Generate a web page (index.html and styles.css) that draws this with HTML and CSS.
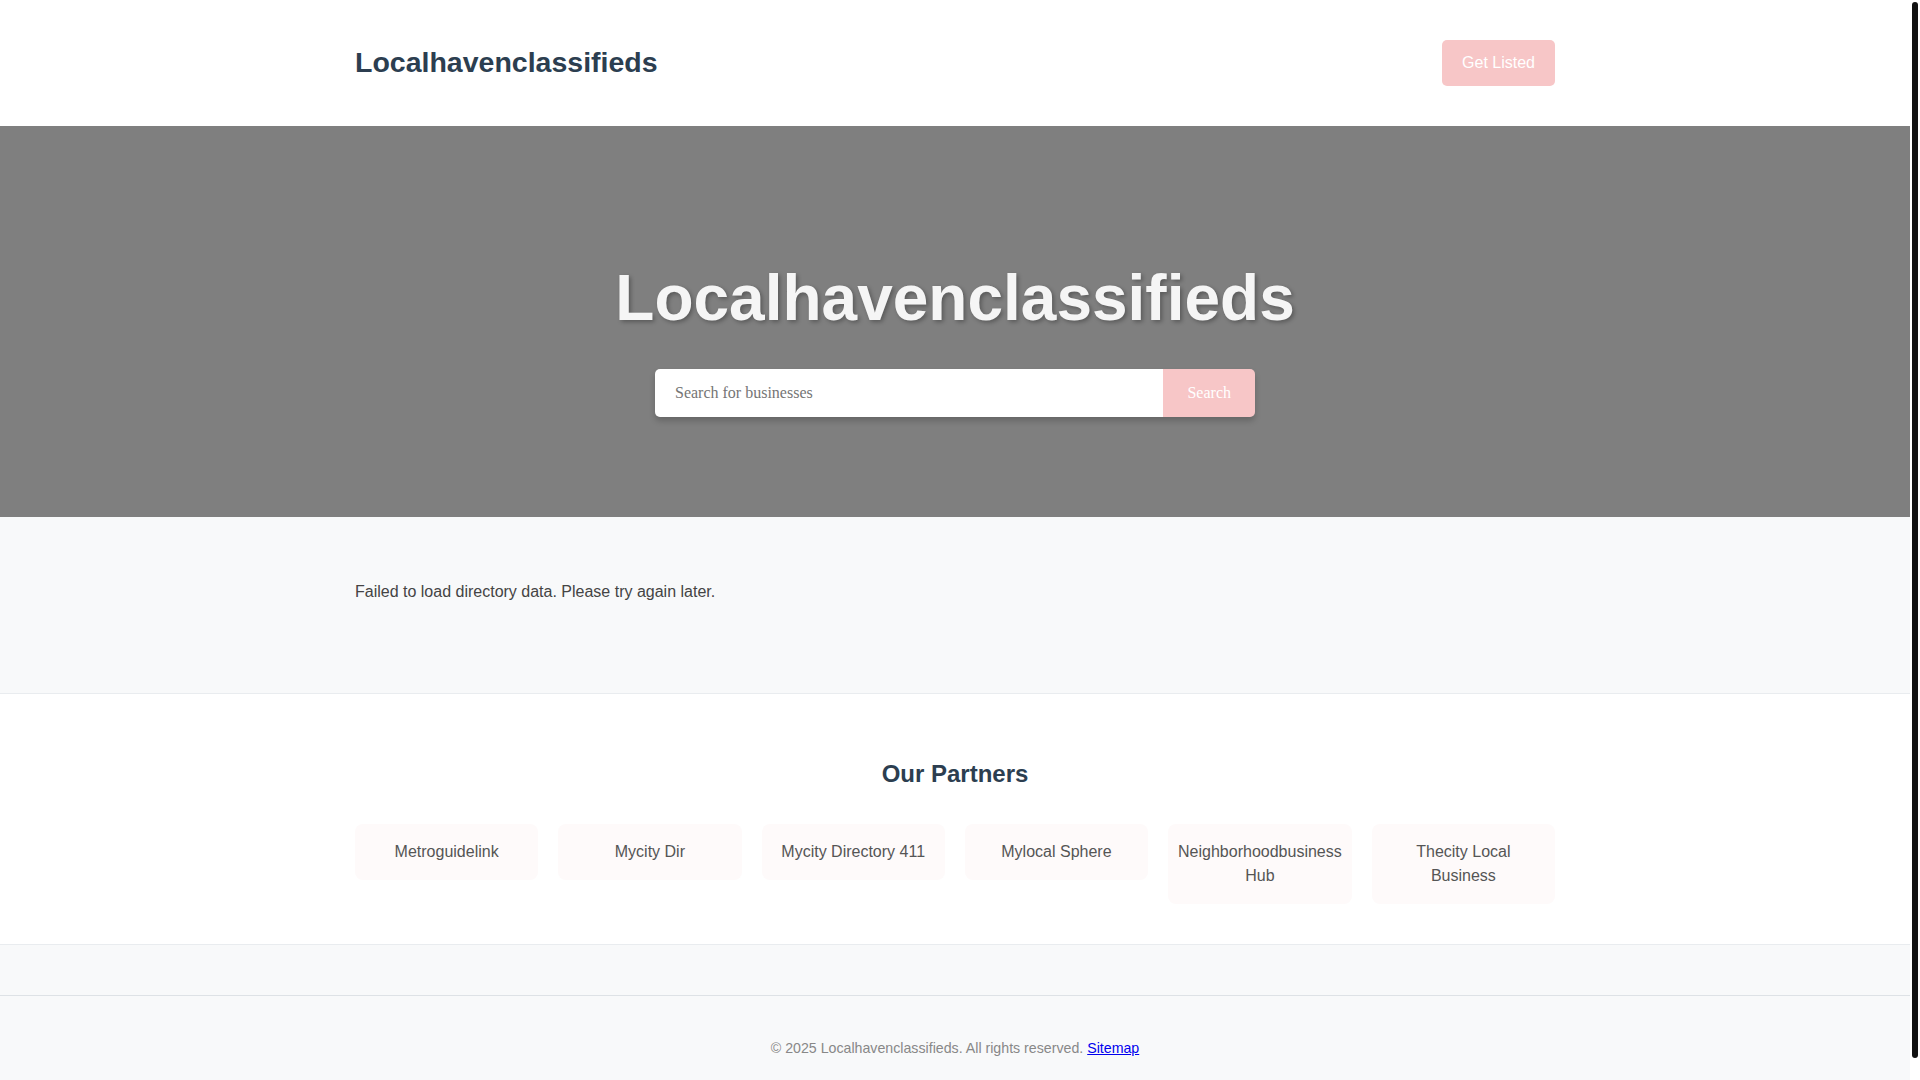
FILE: index.html
```html
<!DOCTYPE html>
<html lang="en">
<head>
<meta charset="utf-8">
<title>Localhavenclassifieds</title>
<link rel="stylesheet" href="styles.css">
</head>
<body>
<header class="site-header">
  <div class="container header-inner">
    <div class="logo">Localhavenclassifieds</div>
    <a class="btn-listed" href="#">Get Listed</a>
  </div>
</header>
<section class="hero">
  <div class="container">
    <h1 class="hero-title">Localhavenclassifieds</h1>
    <form class="search-form">
      <input class="search-input" type="text" placeholder="Search for businesses">
      <button class="search-btn" type="button">Search</button>
    </form>
  </div>
</section>
<section class="directory">
  <div class="container">
    <p class="error-msg">Failed to load directory data. Please try again later.</p>
  </div>
</section>
<section class="partners">
  <div class="container">
    <h2 class="partners-title">Our Partners</h2>
    <div class="partner-grid">
      <div class="partner-card">Metroguidelink</div>
      <div class="partner-card">Mycity Dir</div>
      <div class="partner-card">Mycity Directory 411</div>
      <div class="partner-card">Mylocal Sphere</div>
      <div class="partner-card">Neighborhoodbusiness Hub</div>
      <div class="partner-card">Thecity Local Business</div>
    </div>
  </div>
</section>
<div class="band"></div>
<footer class="site-footer">
  <div class="container">
    <p class="copy">&copy; 2025 Localhavenclassifieds. All rights reserved. <a href="#">Sitemap</a></p>
  </div>
</footer>
<div class="scrollbar" aria-hidden="true"><div class="scrollbar-thumb"></div></div>
</body>
</html>
```
FILE: styles.css
```css
::-webkit-scrollbar {
  width: 0;
  height: 0;
}

* {
  box-sizing: border-box;
}

html, body {
  margin: 0;
  padding: 0;
}

body {
  margin-right: 10px;
  font-family: "Liberation Sans", Arial, sans-serif;
  font-size: 16px;
  line-height: 1.6;
  color: #333;
  background: #fff;
}

.container {
  width: 1200px;
  margin: 0 auto;
}

/* Header */
.site-header {
  background: #fff;
  padding: 40px 0;
}

.header-inner {
  display: flex;
  justify-content: space-between;
  align-items: center;
}

.logo {
  font-size: 28.5px;
  font-weight: 700;
  color: #2c3e50;
  line-height: 32px;
  margin-bottom: 2px;
}

.btn-listed {
  display: inline-block;
  background: #f7c6c7;
  color: #fff;
  font-size: 16px;
  line-height: 18px;
  padding: 14px 20px;
  border-radius: 5px;
  text-decoration: none;
}

/* Hero */
.hero {
  background: #7f7f7f;
  padding: 135px 0 100px;
  text-align: center;
}

.hero-title {
  margin: 0 0 34px;
  font-size: 64px;
  font-weight: 700;
  line-height: normal;
  color: #f5f5f5;
  text-shadow: 2px 2px 4px rgba(0, 0, 0, 0.3);
}

.search-form {
  display: flex;
  width: 600px;
  height: 48px;
  margin: 0 auto;
  border-radius: 5px;
  overflow: hidden;
  box-shadow: 0 4px 6px rgba(0, 0, 0, 0.2);
}

.search-input {
  flex: 1;
  border: none;
  outline: none;
  background: #fff;
  padding: 0 20px;
  font-family: "Liberation Serif", "Times New Roman", serif;
  font-size: 16px;
  color: #333;
}

.search-input::placeholder {
  color: #757575;
}

.search-btn {
  border: none;
  background: #f7c6c7;
  color: #fff;
  padding: 0 24px;
  font-family: "Liberation Serif", "Times New Roman", serif;
  font-size: 16px;
  cursor: pointer;
}

/* Directory */
.directory {
  background: #f8f9fa;
  border-bottom: 1px solid #e9ecef;
  padding: 63px 0 89px;
}

.error-msg {
  margin: 0;
  line-height: 24px;
  color: #444;
}

/* Partners */
.partners {
  background: #fff;
  padding: 66px 0 40px;
}

.partners-title {
  margin: 0 0 36px;
  text-align: center;
  font-size: 24px;
  font-weight: 700;
  line-height: normal;
  color: #2c3e50;
}

.partner-grid {
  display: grid;
  grid-template-columns: repeat(6, 1fr);
  gap: 20px;
  align-items: start;
}

.partner-card {
  background: #fefafa;
  border-radius: 8px;
  padding: 16px 10px;
  text-align: center;
  line-height: 24px;
  color: #555;
}

/* Band & footer */
.band {
  height: 51px;
  background: #f8f9fa;
  border-top: 1px solid #e9ecef;
}

.site-footer {
  background: #f8f9fa;
  border-top: 1px solid #dee2e6;
  padding: 41px 0 43px;
  text-align: center;
}

.copy {
  margin: 0;
  font-size: 14.2px;
  line-height: 22.4px;
  color: #888;
}

.copy a {
  color: #0000ee;
  text-decoration: underline;
}

/* Window scrollbar as captured in the screenshot */
.scrollbar {
  position: fixed;
  top: 0;
  right: 0;
  width: 10px;
  height: 100vh;
  background: #fff;
}

.scrollbar-thumb {
  width: 6px;
  height: 1056px;
  margin: 2px 0 0 2px;
  background: #111;
  border-radius: 3px;
}
```
